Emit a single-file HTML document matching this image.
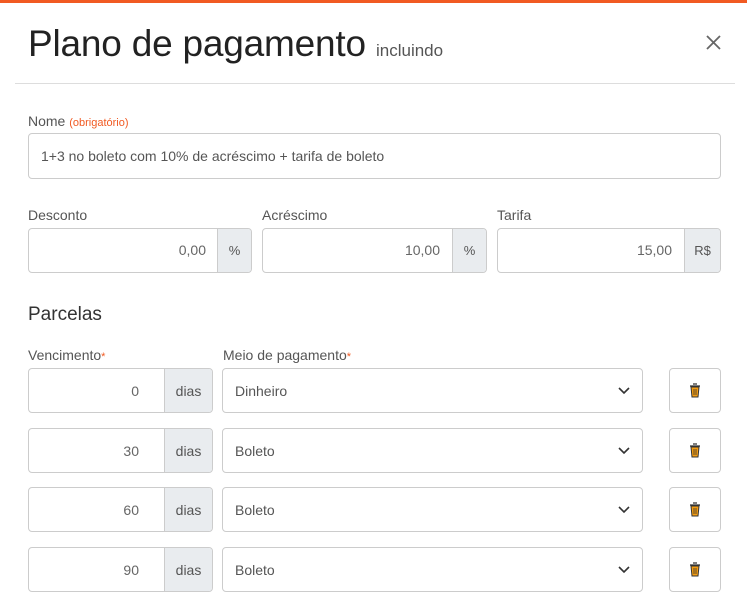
<!DOCTYPE html><html><head><style>
body{margin:0;width:747px;height:600px;overflow:hidden;background:#fff;font-family:"Liberation Sans",sans-serif;color:#333;position:relative}
.top{position:absolute;left:0;top:0;width:747px;height:3px;background:#f15a22}
.abs{position:absolute}
.box{position:absolute;border:1px solid #ccc;border-radius:4px;box-sizing:border-box;background:#fff;overflow:hidden}
.lbl{position:absolute;font-size:14px;color:#555}
.num{position:absolute;font-size:14px;color:#666;text-align:right}
.add{position:absolute;top:0;bottom:0;right:0;background:#e9ecef;border-left:1px solid #ccc;font-size:13px;color:#555;display:flex;align-items:center;justify-content:center}
.req{color:#f15a22;font-size:11px}
.sel{font-size:14px;color:#555;padding-left:12px;display:flex;align-items:center}
.chev{position:absolute;right:12px;top:50%;margin-top:-4px}
.tr{display:flex;align-items:center;justify-content:center}
</style></head><body>
<div class="top"></div>
<div class="abs" style="left:28px;top:23px;font-size:37px;color:#222;letter-spacing:-0.2px">Plano de pagamento <span style="font-size:17px;color:#555;letter-spacing:0">incluindo</span></div>
<svg class="abs" style="left:706px;top:35px" width="15" height="15"><path d="M1 1L14 14M14 1L1 14" stroke="#666" stroke-width="1.8"/></svg>
<div class="abs" style="left:15px;top:83px;width:720px;height:1px;background:#ddd"></div>
<div class="lbl" style="left:28px;top:113px">Nome <span class="req">(obrigatório)</span></div>
<div class="box sel" style="left:28px;top:133px;width:693px;height:46px">1+3 no boleto com 10% de acréscimo + tarifa de boleto</div>
<div class="lbl" style="left:28px;top:207px">Desconto</div>
<div class="lbl" style="left:262px;top:207px">Acréscimo</div>
<div class="lbl" style="left:497px;top:207px">Tarifa</div>
<div class="box" style="left:28px;top:228px;width:224px;height:45px"><div class="num" style="right:45px;top:13px">0,00</div><div class="add" style="width:33px">%</div></div>
<div class="box" style="left:262px;top:228px;width:225px;height:45px"><div class="num" style="right:46px;top:13px">10,00</div><div class="add" style="width:33px">%</div></div>
<div class="box" style="left:497px;top:228px;width:224px;height:45px"><div class="num" style="right:48px;top:13px">15,00</div><div class="add" style="width:35px">R$</div></div>
<div class="abs" style="left:28px;top:304px;font-size:19px;color:#333">Parcelas</div>
<div class="lbl" style="left:28px;top:347px">Vencimento<span class="req">*</span></div>
<div class="lbl" style="left:223px;top:347px">Meio de pagamento<span class="req">*</span></div>
<div id="rows"></div>
<script>
var d=[[0,'Dinheiro',368],[30,'Boleto',428],[60,'Boleto',487],[90,'Boleto',547]],h='';
d.forEach(function(r){var y=r[2];
h+='<div class="box" style="left:28px;top:'+y+'px;width:185px;height:45px"><div class="num" style="right:73px;top:14px">'+r[0]+'</div><div class="add" style="width:47px;font-size:14px">dias</div></div>';
h+='<div class="box sel" style="left:222px;top:'+y+'px;width:421px;height:45px">'+r[1]+'<svg class="chev" width="12" height="8"><path d="M1 1L6 6L11 1" stroke="#333" stroke-width="1.6" fill="none"/></svg></div>';
h+='<div class="box tr" style="left:669px;top:'+y+'px;width:52px;height:45px"><svg width="12" height="15" viewBox="0 0 12 15"><path d="M4 1h4M1 3h10" stroke="#333" stroke-width="1.3"/><path d="M2 4h8l-1 10H3z" fill="#f39c12" stroke="#333" stroke-width="1"/><path d="M5 6v6M7 6v6" stroke="#333" stroke-width=".8"/></svg></div>';});
document.getElementById('rows').innerHTML=h;
</script>
</body></html>
